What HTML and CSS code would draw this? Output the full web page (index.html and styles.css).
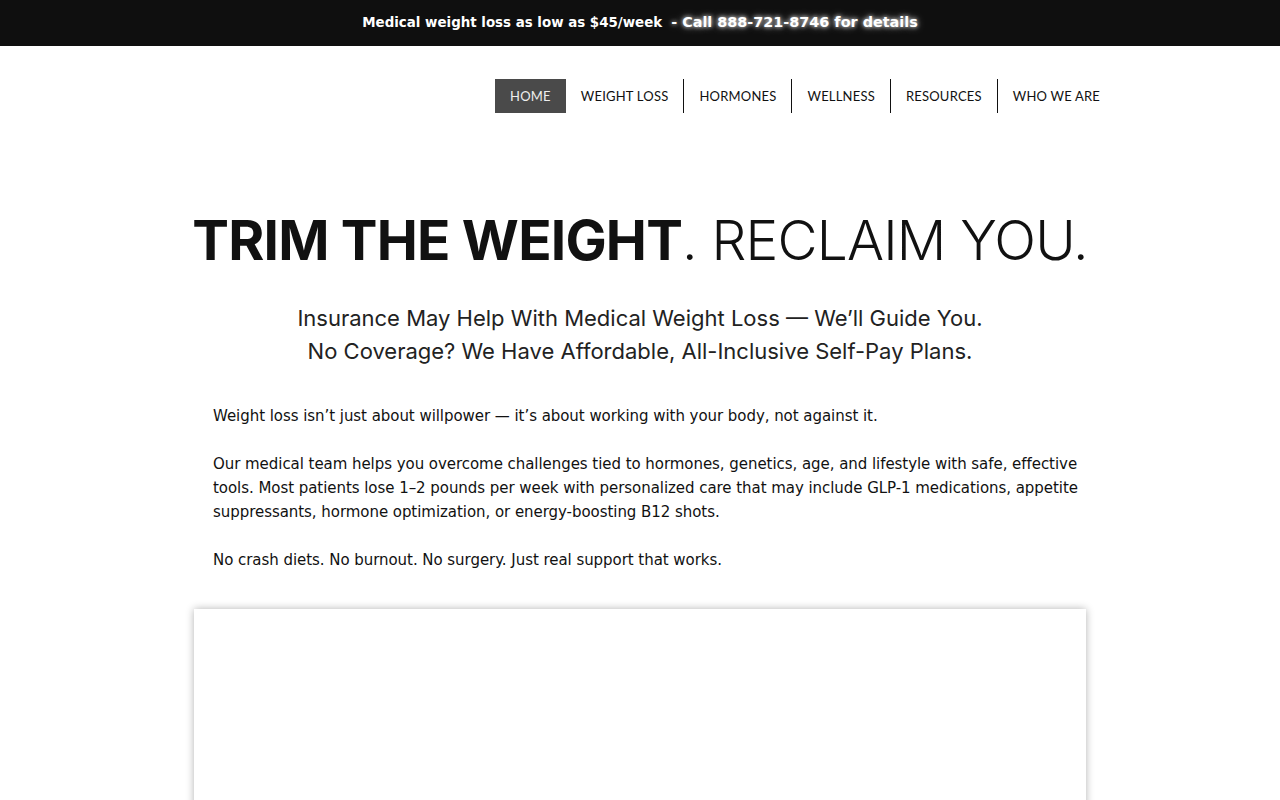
FILE: index.html
```html
<!DOCTYPE html>
<html lang="en">
<head>
<meta charset="utf-8">
<title>Trim the Weight</title>
<link rel="stylesheet" href="styles.css">
</head>
<body>
<div class="topbar">
  <span class="promo">Medical weight loss as low as $45/week</span>
  <span class="call">- Call 888-721-8746 for details</span>
</div>
<header class="header">
  <nav class="nav">
    <a class="nav-item active" href="#">HOME</a>
    <a class="nav-item" href="#">WEIGHT LOSS</a>
    <a class="nav-item sep" href="#">HORMONES</a>
    <a class="nav-item sep" href="#">WELLNESS</a>
    <a class="nav-item sep" href="#">RESOURCES</a>
    <a class="nav-item sep" href="#">WHO WE ARE</a>
  </nav>
</header>
<main class="main">
  <h1 class="title"><strong>TRIM THE WEIGHT</strong>. RECLAIM YOU.</h1>
  <p class="subtitle">Insurance May Help With Medical Weight Loss — We’ll Guide You.<br>No Coverage? We Have Affordable, All-Inclusive Self-Pay Plans.</p>
  <div class="body-text">
    <p>Weight loss isn’t just about willpower — it’s about working with your body, not against it.</p>
    <p>Our medical team helps you overcome challenges tied to hormones, genetics, age, and lifestyle with safe, effective tools. Most patients lose 1–2 pounds per week with personalized care that may include GLP-1 medications, appetite suppressants, hormone optimization, or energy-boosting B12 shots.</p>
    <p>No crash diets. No burnout. No surgery. Just real support that works.</p>
  </div>
  <div class="media-box"></div>
</main>
</body>
</html>
```
FILE: styles.css
```css
html, body {
  margin: 0;
  padding: 0;
  background: #ffffff;
}
body {
  font-family: "DejaVu Sans", Verdana, sans-serif;
  color: #111;
  overflow: hidden;
}
.topbar {
  height: 46px;
  background: #0f0f0f;
  display: flex;
  justify-content: center;
  align-items: center;
  gap: 9px;
  color: #fff;
  font-weight: bold;
  box-sizing: border-box;
  padding-bottom: 2px;
}
.promo {
  font-size: 13.4px;
}
.call {
  font-size: 14.4px;
  text-shadow: 0 0 4px rgba(255,255,255,0.9), 0 0 8px rgba(255,255,255,0.5);
}
.header {
  display: flex;
  justify-content: flex-end;
  padding: 33px 165px 0 0;
  height: 100px;
  box-sizing: border-box;
}
.nav {
  display: flex;
  height: 34px;
}
.nav-item {
  display: flex;
  align-items: center;
  padding: 0 15px 1px;
  font-family: "Lato", "Noto Sans", sans-serif;
  font-size: 13px;
  letter-spacing: 0.2px;
  color: #111;
  text-decoration: none;
}
.nav-item.active {
  background: #4a4a4a;
  color: #eee;
}
.nav-item.sep {
  border-left: 1px solid #111;
}
.main {
  width: 892px;
  margin: 0 auto;
  padding-top: 52px;
}
.title {
  margin: 0 -20px;
  text-align: center;
  white-space: nowrap;
  font-family: "Inter", "Noto Sans", sans-serif;
  font-weight: 300;
  font-size: 55px;
  line-height: 84px;
  color: #111;
  letter-spacing: -0.8px;
}
.title strong {
  font-weight: 700;
}
.subtitle {
  margin: 20px 0 0;
  text-align: center;
  font-family: "Inter", "Noto Sans", sans-serif;
  font-weight: 400;
  font-size: 22px;
  line-height: 33px;
  color: #222;
}
.body-text {
  padding: 36px 0 0 19px;
  font-size: 15px;
  line-height: 24px;
  letter-spacing: -0.05px;
  color: #111;
}
.body-text p {
  margin: 0 0 24px;
}
.media-box {
  margin-top: 37px;
  height: 300px;
  background: #fff;
  box-shadow: 0 0 8px rgba(0,0,0,0.3);
}
```
